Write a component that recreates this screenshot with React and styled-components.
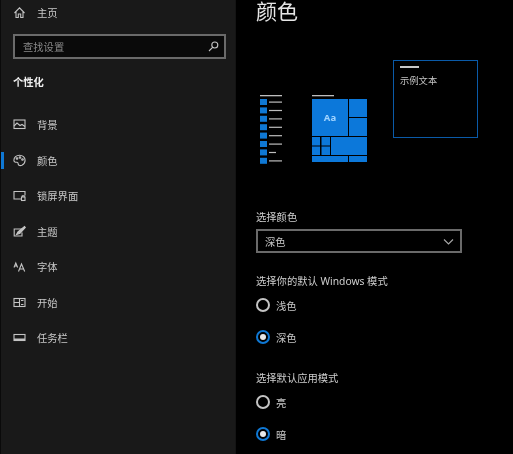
import React from "react";
import styled, { createGlobalStyle } from "styled-components";

const Global = createGlobalStyle`
  html, body { margin: 0; padding: 0; background: #000; }
  #root { width: 513px; height: 454px; overflow: hidden; }
  * { box-sizing: border-box; }
`;
const Page = styled.div`
  width: 513px; height: 454px; display: flex; overflow: hidden;
  background: #000; color: #d8d8d8;
  font-family: "Noto Sans", "Noto Sans CJK SC", sans-serif;
  font-size: 10.3px; filter: blur(0.45px);
`;
const Sidebar = styled.aside`
  width: 236px; height: 100%; flex: none; background: #191919;
  border-left: 1px solid #0a0a0a; border-right: 1px solid #141414;
  padding: 0 10px 0 0; display: flex; flex-direction: column;
`;
const Row = styled.div`
  height: 35.5px; display: flex; align-items: center; gap: 11px; padding-left: 12px;
  position: relative; color: #c8c8c8; flex: none;
`;
const HomeRow = styled(Row)`height: 24px; color: #c8c8c8;`;
const ActiveBar = styled.span`
  position: absolute; left: 0; top: 9px; width: 3px; height: 17px; background: #0f78d4;
`;
const IconBox = styled.span`
  width: 13px; height: 13px; display: flex; flex: none; color: #c4c4c4;
  svg { width: 13px; height: 13px; display: block; }
`;
const Search = styled.div`
  margin: 10px 0 0 12px; width: 213px; height: 25px; flex: none;
  border: 2px solid #6a6a6a; background: #0a0a0a; display: flex; align-items: center;
  justify-content: space-between; padding: 0 4px 0 8px; color: #8a8a8a;
`;
const SectionTitle = styled.div`
  margin: 13px 0 15px 12px; height: 20px; line-height: 20px; font-weight: 700;
  color: #f0f0f0; font-size: 10.3px;
`;
const Main = styled.main`
  flex: 1; padding-left: 20px; display: flex; flex-direction: column; align-items: flex-start; min-width: 0;
`;
const Title = styled.h1`
  margin: 0; height: 23px; font-size: 21px; line-height: 23px; font-weight: 400; color: #e6e6e6;
`;
const Previews = styled.div`
  margin-top: 37px; margin-left: 4px; display: flex; align-items: flex-start; height: 104px;
`;
const DrawingList = styled.svg`
  width: 23px; height: 69px; margin-top: 35px; margin-right: 29px; flex: none;
`;
const DrawingTiles = styled.svg`
  width: 56px; height: 69px; margin-top: 35px; margin-right: 25px; flex: none;
`;
const SampleWindow = styled.div`
  width: 85px; height: 78px; border: 1px solid #0a5aa8; background: #000; padding: 5px 6px;
  font-size: 9.3px; color: #c4c4c4; flex: none;
`;
const SampleLine = styled.div`
  width: 19px; height: 2px; background: #c8c8c8; margin-bottom: 5px;
`;
const Label = styled.div`
  height: 16px; line-height: 16px; color: #cfcfcf; margin-top: ${p => p.$top}px; white-space: nowrap;
`;
const Select = styled.div`
  margin-top: 4px; width: 206px; height: 24px; border: 2px solid #6a6a6a; background: #000;
  display: flex; align-items: center; justify-content: space-between; padding: 0 6px 0 7px; color: #c8c8c8;
  svg { width: 11px; height: 11px; display: block; }
`;
const RadioRow = styled.div`
  display: flex; align-items: center; gap: 6px; height: 16px; margin-top: ${p => p.$top}px; color: #c8c8c8;
`;
const Radio = styled.span`
  width: 14px; height: 14px; border-radius: 50%; flex: none; display: flex; align-items: center; justify-content: center;
  border: 2px solid ${p => (p.$on ? "#0f78d4" : "#c4c4c4")};
  &::after { content: ""; width: 6px; height: 6px; border-radius: 50%; background: ${p => (p.$on ? "#e8e8e8" : "transparent")}; }
`;

const stroke = { fill: "none", stroke: "currentColor", strokeWidth: 1.1 };
const icons = {
  home: <path {...stroke} d="M1.5 7 6.5 1.8 11.5 7M3 5.8V11.5H5.3V8H7.7V11.5H10V5.8" />,
  search: <g {...stroke}><circle cx="7.8" cy="5" r="3" /><path d="M5.6 7.4 2 11" /></g>,
  image: <g {...stroke}><rect x="1" y="2" width="11" height="8.5" /><path d="M1 8 4 5l3 2.5L9 6.5l3 2" /></g>,
  palette: <g {...stroke}><path d="M6.5 1.2C3.3 1.2.9 3.4.9 6.2c0 2.2 2 2 3.2 2 1.2 0 .9 1.1 1.1 2 .3 1.6 2.1 1.7 3.7 1 2-1 3.2-3 3.2-5C12.1 3.2 9.7 1.2 6.5 1.2Z" /><circle cx="4" cy="4.5" r=".8" /><circle cx="7" cy="3.5" r=".8" /><circle cx="9.5" cy="5.5" r=".8" /></g>,
  lock: <g {...stroke}><path d="M8 10H1V2.5H12V6.5" /><rect x="8.5" y="8" width="3.5" height="3.5" /><path d="M9.3 8V6.8H11.2V8" /></g>,
  theme: <g {...stroke}><path d="M9 4H1.2V11H9V7.5" /><path d="M3.5 9.5 5 6.8 11.5 1.5 12.3 2.5 7 8.3Z" fill="currentColor" /></g>,
  font: <g {...stroke}><path d="M1 7.5 2.800 3 4.600 7.5M1.600 6H4" /><path d="M5.500 11.500 8.500 4 11.700 11.500M6.700 9H10.500" /></g>,
  start: <g {...stroke}><rect x="1" y="2.500" width="11" height="8" /><path d="M1 6.500H6.500M6.500 2.500V10.500" /><path d="M8 4.500H10.500M8 8.500H10.500" /></g>,
  taskbar: <g {...stroke}><rect x="1" y="3.500" width="11" height="6" /><path d="M1 8.500H12" strokeWidth="2" /></g>,
};
const Icon = ({ name }) => <IconBox><svg viewBox="0 0 13 13">{icons[name]}</svg></IconBox>;

const nav = [
  ["image", "背景"], ["palette", "颜色", true], ["lock", "锁屏界面"], ["theme", "主题"],
  ["font", "字体"], ["start", "开始"], ["taskbar", "任务栏"],
];

const listRows = [0, 1, 2, 3, 4, 5, 6, 7];
const ListDrawing = () => (
  <DrawingList viewBox="0 0 23 69">
    <rect x="0" y="0" width="22" height="1.3" fill="#bdbdbd" />
    {listRows.map(i => (
      <g key={i}>
        <rect x="0" y={4 + i * 8.4} width="7" height="6" fill="#0f78d4" />
        <rect x="9" y={6.5 + i * 8.4} width={i === 6 ? 7 : 13} height="1.2" fill="#bdbdbd" />
      </g>
    ))}
  </DrawingList>
);
const TilesDrawing = () => (
  <DrawingTiles viewBox="0 0 56 69">
    <rect x="0" y="0" width="22" height="1.3" fill="#bdbdbd" />
    <g fill="#0c78da">
      <rect x="0" y="4" width="36" height="37" />
      <rect x="37" y="4" width="18" height="18" />
      <rect x="37" y="23" width="18" height="18" />
      <rect x="0" y="42" width="8" height="8.5" />
      <rect x="9.5" y="42" width="8.5" height="8.5" />
      <rect x="0" y="51.5" width="8" height="8.5" />
      <rect x="9.5" y="51.5" width="8.5" height="8.5" />
      <rect x="19" y="42" width="36" height="18" />
      <rect x="0" y="61" width="36" height="6" />
      <rect x="37" y="61" width="18" height="6" />
    </g>
    <text x="18" y="25.5" textAnchor="middle" fontSize="9.5" fontWeight="700" fontFamily="Noto Sans, sans-serif" fill="#9fd3ff">Aa</text>
  </DrawingTiles>
);

export default function App() {
  return (
    <Page>
      <Global />
      <Sidebar>
        <HomeRow><Icon name="home" />主页</HomeRow>
        <Search>查找设置<Icon name="search" /></Search>
        <SectionTitle>个性化</SectionTitle>
        {nav.map(([icon, text, active]) => (
          <Row key={text}>
            {active && <ActiveBar />}
            <Icon name={icon} />{text}
          </Row>
        ))}
      </Sidebar>
      <Main>
        <Title>颜色</Title>
        <Previews>
          <ListDrawing />
          <TilesDrawing />
          <SampleWindow><SampleLine />示例文本</SampleWindow>
        </Previews>
        <Label $top={45}>选择颜色</Label>
        <Select>深色
          <svg viewBox="0 0 11 11"><path d="M1 3.5 5.5 8 10 3.5" fill="none" stroke="#a8a8a8" strokeWidth="1.1" /></svg>
        </Select>
        <Label $top={20}>选择你的默认 Windows 模式</Label>
        <RadioRow $top={8}><Radio />浅色</RadioRow>
        <RadioRow $top={16}><Radio $on />深色</RadioRow>
        <Label $top={25}>选择默认应用模式</Label>
        <RadioRow $top={8}><Radio />亮</RadioRow>
        <RadioRow $top={16}><Radio $on />暗</RadioRow>
      </Main>
    </Page>
  );
}
